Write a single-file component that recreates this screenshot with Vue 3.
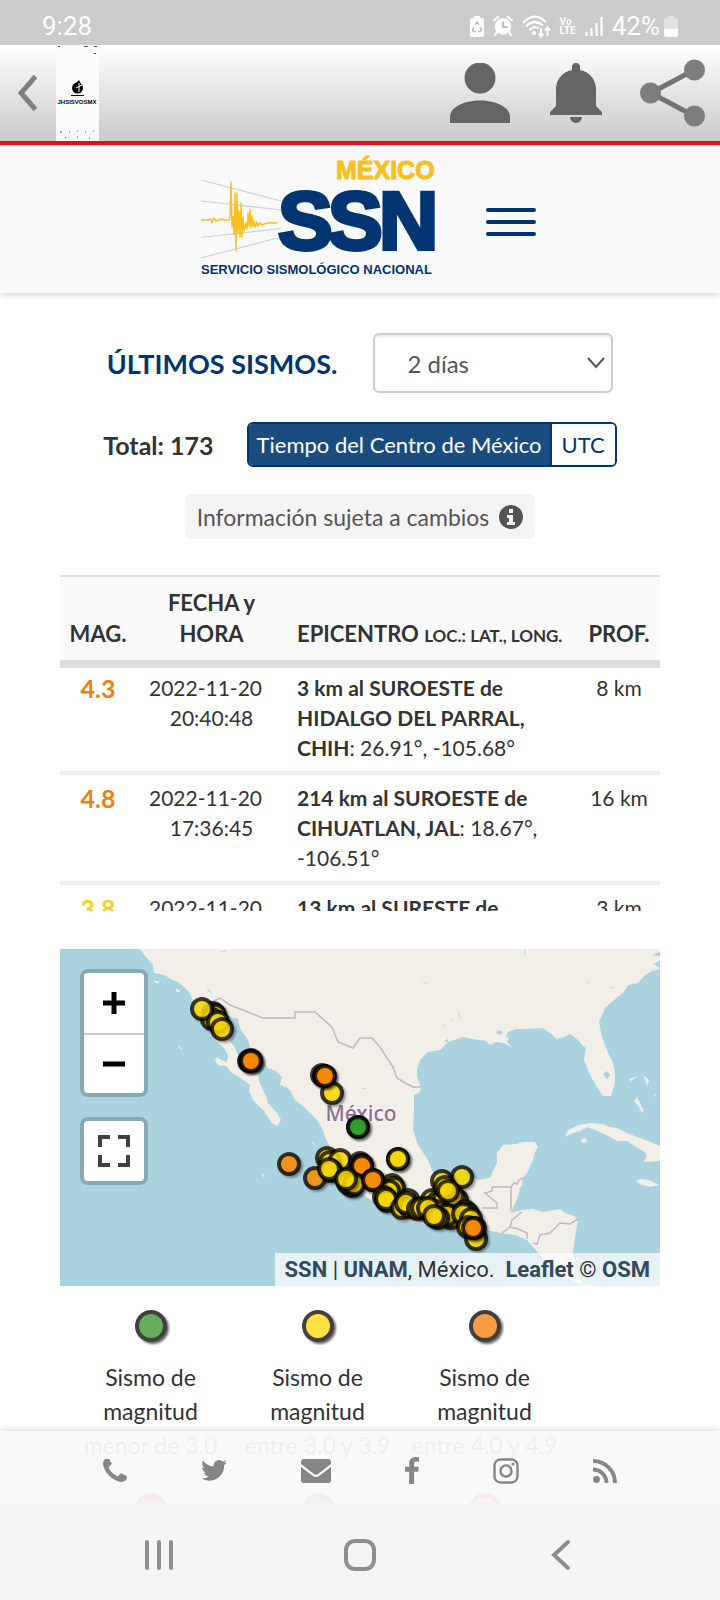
<script setup>
import { ref } from 'vue'

const period = ref('2')
const zone = ref('centro')

const quakes = [
  { mag: '4.3', level: 'orange', date: '2022-11-20', time: '20:40:48', place: '3 km al SUROESTE de HIDALGO DEL PARRAL, CHIH', coords: '26.91°, -105.68°', depth: '8 km' },
  { mag: '4.8', level: 'orange', date: '2022-11-20', time: '17:36:45', place: '214 km al SUROESTE de CIHUATLAN, JAL', coords: '18.67°, -106.51°', depth: '16 km' },
  { mag: '3.8', level: 'yellow', date: '2022-11-20', time: '', place: '13 km al SURESTE de', coords: '', depth: '3 km' },
]

const Y = '#ffdf00'
const O = '#ff9000'
const G = '#35a030'
const markers = [
  [153, 64, Y], [155, 66, Y], [152, 70, Y], [142, 60, Y], [158, 73, Y], [162, 80, Y],
  [189, 112, O], [191, 111, O], [190, 112, O], [191, 112, O],
  [272, 144, Y], [262, 126, O], [264, 127, O], [265, 127, O],
  [298, 178, G], [298, 178, G],
  [229, 215, O], [255, 229, O],
  [267, 209, Y], [270, 213, Y], [280, 211, Y], [271, 222, Y], [269, 220, Y],
  [338, 210, Y], [338, 210, Y],
  [300, 214, O], [302, 216, O], [302, 217, O],
  [292, 237, Y], [288, 234, Y], [294, 235, Y], [286, 230, Y],
  [332, 236, Y], [334, 239, Y], [329, 242, Y], [313, 231, O], [313, 231, O],
  [324, 248, Y], [327, 252, Y], [326, 250, Y],
  [348, 251, Y], [342, 259, Y], [350, 258, Y], [346, 254, Y], [358, 260, Y],
  [372, 251, Y], [378, 253, Y], [362, 259, Y], [384, 250, Y], [376, 262, Y],
  [397, 251, Y], [393, 247, Y], [402, 228, Y], [382, 232, Y], [385, 238, Y], [388, 242, Y],
  [368, 259, Y], [391, 269, Y], [387, 266, Y], [378, 269, Y], [374, 267, Y],
  [405, 262, Y], [408, 265, Y], [403, 265, Y], [411, 270, Y],
  [416, 290, Y], [408, 278, Y], [415, 279, O], [413, 279, O],
]

const legend = [
  { color: '#66ad5e', lines: ['Sismo de', 'magnitud', 'menor de 3.0'] },
  { color: '#ffe142', lines: ['Sismo de', 'magnitud', 'entre 3.0 y 3.9'] },
  { color: '#f99b43', lines: ['Sismo de', 'magnitud', 'entre 4.0 y 4.9'] },
  { color: '#ff5a5a', lines: [] },
  { color: '#b06a6a', lines: [] },
  { color: '#ff4df0', lines: [] },
]
</script>

<template>
  <div class="screen">
    <div class="status">
      <span class="clock">9:28</span>
      <div class="status-icons">
        <svg class="s-recycle" viewBox="0 0 14 21"><path fill="#fff" d="M4 0h6v2h2a2 2 0 0 1 2 2v15a2 2 0 0 1-2 2H2a2 2 0 0 1-2-2V4a2 2 0 0 1 2-2h2z" /><path d="M5 9l2-3 2 3M10 11l1.500 3-1 1.500H8.500M4 11l-1.500 3 1 1.500h2" fill="none" stroke="#b5b5b5" stroke-width="1.300" /></svg>
        <svg class="s-alarm" viewBox="0 0 20 20"><circle cx="10" cy="10.500" r="8.300" fill="#fff" /><path d="M1 4.500L5 1M19 4.500L15 1M4 16l-2 3M16 16l2 3" stroke="#fff" stroke-width="2.200" stroke-linecap="round" /><path d="M10 5.500v5.500h4.500" fill="none" stroke="#bbb" stroke-width="1.800" /></svg>
        <svg class="s-wifi" viewBox="0 0 29 23"><g fill="none" stroke="#fff" stroke-width="2.200"><path d="M1 8Q12-4 24 7" /><path d="M4 11.500Q12 3 21 10.500" /><path d="M7.500 15Q12 10 17 13.500" /></g><circle cx="12" cy="18" r="2" fill="#fff" /><path d="M19 13v8M16.500 18.500L19 21.500l2.500-3M25.500 21v-8M23 15.500l2.500-3 2.500 3" fill="none" stroke="#fff" stroke-width="2" /></svg>
        <span class="volte">Vo<br>LTE</span>
        <svg class="s-signal" viewBox="0 0 18 19"><path d="M1.500 15v4M6.500 11v8M11.500 6v13M16.500 0v19" stroke="#fff" stroke-width="2.200" /></svg>
        <span class="percent">42%</span>
        <svg class="s-batt" viewBox="0 0 14 21"><path fill="#e2e2e2" d="M4 0h6v2h2a2 2 0 0 1 2 2v9H0V4a2 2 0 0 1 2-2h2z" /><path fill="#fff" d="M0 13h14v6a2 2 0 0 1-2 2H2a2 2 0 0 1-2-2z" /></svg>
      </div>
    </div>

    <header class="appbar">
      <button class="icon-btn back" aria-label="Volver"><svg viewBox="0 0 20 38"><path d="M17.500 2.500L3 19l14.500 16.500" fill="none" stroke="#808080" stroke-width="5" /></svg></button>
      <svg class="app-logo" viewBox="0 0 43 96">
        <rect width="43" height="96" fill="#fcfcfc" />
        <circle cx="21.500" cy="43" r="5.500" fill="#000" /><path d="M19 39l4-4 2 4z" fill="#000" /><path d="M23 38v9M20 43l6-3" stroke="#fff" stroke-width="1" /><path d="M15 50.500h13" stroke="#000" />
        <text x="21" y="59" text-anchor="middle" class="app-logo-text">JHSISVOSMX</text>
        <path d="M2 1.500h2M28 1.500h4M38 1.500h3M38 8.500h2M4 87h2M13 87h1M21 86h1M29 87h1M37 86h1M9 92.500h1M21 92h1M33 93h1" stroke="#555" />
      </svg>
      <div class="spacer"></div>
      <button class="icon-btn person" aria-label="Perfil"><svg viewBox="0 0 60 60"><circle cx="30" cy="15" r="15.500" fill="#656565" /><path d="M0 60V54C0 44 14 37.500 30 37.500S60 44 60 54v6z" fill="#656565" /></svg></button>
      <button class="icon-btn bell" aria-label="Notificaciones"><svg viewBox="0 0 52 60"><path fill="#656565" d="M22 7V4a4 4 0 0 1 8 0v3c10 2 16 10 16 19v17l6 6v3H0v-3l6-6V26C6 17 12 9 22 7zM20 54h12a6 6 0 0 1-12 0z" /></svg></button>
      <button class="icon-btn share" aria-label="Compartir"><svg viewBox="0 0 66 68"><path d="M54 11L11 34l43 23" fill="none" stroke="#737373" stroke-width="5" /><g fill="#7d7d7d"><circle cx="54.500" cy="11" r="10.500" /><circle cx="10.500" cy="34" r="10.500" /><circle cx="54.500" cy="57" r="10.500" /></g></svg></button>
    </header>

    <main class="web">
      <div class="site-head">
        <svg class="ssn" viewBox="20 6 236 126" role="img" aria-label="SSN México">
          <g fill="none" stroke="#c9d1dc" stroke-width="1.200"><path d="M21 35l80 21M21 56l80 9M21 92.500l80-9M21 113l80-21" /></g>
          <path d="M21 75h7l3-1 1 4 2-5 2 3 3-1 3-1 2 1h5l1-2 1-36 1 45 1-10 1 18 1-42 1 58 1-58 1 40 1-22 1 26 1-34 1 34 1-20 1 14 2-8 1 6 1-16 1 13 1-17 1 19 1-12 1 10 1-5 1 6 2-5 1 4 2-3 2 2 5-2h10" fill="none" stroke="#f8c01d" stroke-width="1.400" stroke-linejoin="round" />
          <text x="156" y="34" class="logo-mx">MÉXICO</text>
          <text x="98 148 199" y="104" class="logo-ssn">SSN</text>
          <text x="21" y="129" class="logo-sub">SERVICIO SISMOLÓGICO NACIONAL</text>
        </svg>
        <button class="burger" aria-label="Menú"><span></span><span></span><span></span></button>
      </div>

      <section class="content">
        <div class="title-row">
          <label for="period" class="title">ÚLTIMOS SISMOS.</label>
          <div class="select-wrap">
            <select id="period" v-model="period"><option value="2">2 días</option></select>
            <svg viewBox="0 0 18 12"><path d="M1 1l8 9 8-9" fill="none" stroke="#555" stroke-width="2" /></svg>
          </div>
        </div>

        <div class="total-row">
          <span class="total">Total: 173</span>
          <div class="zones">
            <button :class="{ on: zone === 'centro' }" @click="zone = 'centro'">Tiempo del Centro de México</button>
            <button :class="{ on: zone === 'utc' }" @click="zone = 'utc'">UTC</button>
          </div>
        </div>

        <div class="notice">
          <span>Información sujeta a cambios</span>
          <svg viewBox="0 0 24 24"><circle cx="12" cy="12" r="12" fill="#555" /><path d="M10 4h4v4h-4zM8 10h6v7h2v3H8v-3h2v-4H8z" fill="#f4f4f4" /></svg>
        </div>

        <div class="table-box">
          <table>
            <colgroup><col class="c-mag"><col class="c-date"><col><col class="c-depth"></colgroup>
            <thead>
              <tr><th>MAG.</th><th>FECHA y HORA</th><th class="left">EPICENTRO <small>LOC.: LAT., LONG.</small></th><th>PROF.</th></tr>
            </thead>
            <tbody>
              <tr v-for="q in quakes" :key="q.mag">
                <td class="mag" :class="q.level">{{ q.mag }}</td>
                <td class="when"><span class="date">{{ q.date }}</span> <span class="time">{{ q.time }}</span></td>
                <td class="left"><b>{{ q.place }}</b><template v-if="q.coords">: {{ q.coords }}</template></td>
                <td>{{ q.depth }}</td>
              </tr>
            </tbody>
          </table>
        </div>

        <div class="map">
          <svg class="map-art" viewBox="0 0 600 337" preserveAspectRatio="xMidYMid slice">
            <defs>
              <filter id="pin-shadow" x="-30%" y="-30%" width="180%" height="180%"><feDropShadow dx="2" dy="2" stdDeviation="1" flood-color="#000" flood-opacity="0.450" /></filter>
            </defs>
            <rect width="600" height="337" fill="#aad3df" />
            <g fill="#f2efe9">
              <path d="M80 0L86 8 93 16 94 24 100 25 105 26 110 30 118 33 124 38 130 44 132 50 137 53 139 62 142 71 150 84 157 93 164 99 168 106 167 113 161 111 157 108 155 111 158 116 166 117 172 124 182 130 190 136 189 142 193 151 203 161 212 174 217 177 221 171 217 164 208 154 206 147 203 141 199 132 198 124 190 119 183 110 177 104 174 97 169 91 167 82 168 66 172 69 178 69 180 79 188 91 190 98 198 104 203 111 208 119 216 122 222 128 220 136 226 138 230 141 235 151 244 158 257 171 263 181 265 188 270 198 266 210 274 228 288 240 300 243 320 258 340 271 367 276 393 281 405 284 415 279 427 281 440 284 455 286 467 291 473 298 482 308 493 314 503 328 517 334 530 337 524 337 515 321 513 304 515 288 518 271 514 267 505 264 500 260 483 263 473 260 462 261 450 264 452 261 458 248 460 240 462 236 463 229 467 224 473 211 475 203 478 198 475 193 463 193 457 195 443 196 437 204 437 214 432 224 430 229 423 230 418 231 413 228 405 235 390 238 378 232 372 221 368 211 358 196 353 181 354 161 354 146 360 143 361 138 357 128 357 120 360 111 365 106 368 103 380 101 388 93 403 88 412 90 420 91 426 92 430 96 436 93 443 94 452 98 447 93 449 88 445 89 448 83 456 80 465 80 483 79 490 84 497 90 504 88 510 85 518 91 522 96 526 99 524 111 530 126 537 138 543 147 551 147 555 134 555 124 553 114 548 104 542 88 539 73 545 59 554 51 563 44 568 36 578 34 585 26 592 22 600 20V0z" />
              <path d="M505 188L508 181 519 176 530 174 543 175 550 178 557 179 567 184 577 188 588 192 600 197V212L583 213 587 208 585 203 578 199 567 192 557 192 550 188 540 183 527 178 520 182 513 184zM521 190l5-1 1 4-5 1zM575 232l6-2 8 1 10 5-8 2-9-2zM574 152l3-4 3 6 4 10-5-6zM569 130l9-3-7 5zM583 126l6 5-2 6-2-7zM594 144l2 4-2-1zM579 161l4-2 1 5z" />
              <path d="M94 32l5 1-2 1zM116 40l4 2-3 1zM118 97l4 3zM202 225l2 1v2zM252 193l4 4z" stroke="#f2efe9" />
            </g>
            <g fill="#aad3df"><path d="M146 39l5 5-1-3zM543 125l4-3 3 4-3 4zM436 83l4-2 3 3-4 2zM600 3l-8 3 8 1zM600 12l-7 3 7 4zM384 92l4-2v3zM300 139h5v1zM299 138l-4 1z" /><path d="M363 32l4 3M398 63l3 7M391 69l3 3M382 76l3 1M526 32l4 4M550 38l4 1M465 0v6M160 3l6-1M448 262l8-3M459 242l3-5" stroke="#bcdbe2" fill="none" /></g>
            <g fill="none" stroke="#c9b2c4" stroke-width="1.500">
              <path d="M137 53L152 53 160 49 170 56 203 69H235V63H255L264 71 272 78 278 93 293 99 300 89H312L320 98 333 118 337 129 345 134 353 138H361" />
              <path d="M422 259H437V254L425 244 432 242V238H451V261M451 238L454 234 457 235 459 231 463 229M462 263L452 271 450 278 442 284M450 278L458 280 467 284V290M473 294L477 295 480 286 490 284 500 274 510 275 518 270" />
            </g>
            <text x="301" y="172" text-anchor="middle" class="country">México</text>
            <circle v-for="(m, i) in markers" :key="i" :cx="m[0]" :cy="m[1]" r="10" :fill="m[2]" fill-opacity="0.800" stroke="#000" stroke-width="4" stroke-opacity="0.740" filter="url(#pin-shadow)" />
          </svg>
          <div class="controls">
            <div class="ctl">
              <button aria-label="Acercar"><svg viewBox="0 0 22 22"><path d="M0 11h22M11 0v22" stroke="#000" stroke-width="5" /></svg></button>
              <button aria-label="Alejar"><svg viewBox="0 0 22 22"><path d="M0 11h22" stroke="#000" stroke-width="5" /></svg></button>
            </div>
            <div class="ctl">
              <button aria-label="Pantalla completa"><svg class="full" viewBox="0 0 32 32"><path d="M2 12V2h10M20 2h10v10M30 20v10H20M12 30H2V20" fill="none" stroke="#404040" stroke-width="4" /></svg></button>
            </div>
          </div>
          <div class="credit"><a href="#ssn">SSN</a> | <a href="#unam">UNAM</a>, México. &nbsp;<a href="#leaflet">Leaflet</a> © <a href="#osm">OSM</a></div>
        </div>

        <ul class="legend">
          <li v-for="item in legend" :key="item.color">
            <svg viewBox="0 0 38 38"><circle cx="19" cy="19" r="14" :fill="item.color" stroke="#404040" stroke-width="4" /></svg>
            <p><span v-for="l in item.lines" :key="l">{{ l }}</span></p>
          </li>
        </ul>
      </section>

      <nav class="social">
        <a href="#tel" class="i24" aria-label="Teléfono"><svg viewBox="192 192 1408 1408"><path d="M1600 1240q0 27-10 70.500t-21 68.500q-21 50-122 106-94 51-186 51-27 0-53-3.500t-57.500-12.500-47-14.500-55.500-20.500-49-18q-98-35-175-83-127-79-264-216t-216-264q-48-77-83-175-3-9-18-49t-20.500-55.500-14.500-47-12.500-57.500-3.500-53q0-92 51-186 56-101 106-122 25-11 68.500-21t70.500-10q14 0 21 3 18 6 53 76 11 19 30 54t35 63.500 31 53.500q3 4 17.500 25t21.500 35.500 7 28.500q0 20-28.500 50t-62 55-62 53-28.500 46q0 9 5 22.500t8.500 20.500 14 24 11.500 19q76 137 174 235t235 174q2 1 19 11.500t24 14 20.500 8.500 22.500 5q18 0 46-28.500t53-62 55-62 50-28.500q14 0 28.500 7t35.500 21.500 25 17.500q25 15 53.500 31t63.500 35 54 30q70 35 76 53 3 7 3 21z" /></svg></a>
        <a href="#tw" class="i26" aria-label="Twitter"><svg viewBox="100 200 1600 1400"><path d="M1684 408q-67 98-162 167 1 14 1 42 0 130-38 259.500t-115.500 248.500-184.500 210.500-258 146-323 54.500q-271 0-496-145 35 4 78 4 225 0 401-138-105-2-188-64.500t-114-159.500q33 5 61 5 43 0 85-11-112-23-185.500-111.500t-73.500-205.500v-4q68 38 146 41-66-44-105-115t-39-154q0-88 44-163 121 149 294.500 238.500t371.500 99.500q-8-38-8-74 0-134 94.500-228.500t228.500-94.500q140 0 236 102 109-21 205-78-37 115-142 178 93-10 186-50z" /></svg></a>
        <a href="#mail" class="i30" aria-label="Correo"><svg viewBox="0 0 30 24"><path d="M3 0h24a3 3 0 0 1 3 3v2L17 15q-2 1.500-4 0L0 5V3a3 3 0 0 1 3-3zM0 8l12 9q3 2 6 0l12-9v13a3 3 0 0 1-3 3H3a3 3 0 0 1-3-3z" /></svg></a>
        <a href="#fb" class="i14" aria-label="Facebook"><svg viewBox="479 0 864 1664"><path d="M1343 12v264h-157q-86 0-116 36t-30 108v189h293l-39 296h-254v759h-306v-759h-255v-296h255v-218q0-186 104-288.500t277-102.500q147 0 228 12z" /></svg></a>
        <a href="#ig" class="i26" aria-label="Instagram"><svg viewBox="0 0 26 26"><rect x="1.500" y="1.500" width="23" height="23" rx="6" fill="none" stroke="#868686" stroke-width="2.400" /><circle cx="13" cy="13" r="5.600" fill="none" stroke="#868686" stroke-width="2.400" /><circle cx="20" cy="6" r="1.600" /></svg></a>
        <a href="#rss" class="i24" aria-label="RSS"><svg viewBox="0 0 24 24"><circle cx="3.500" cy="20.500" r="3.400" /><path d="M0 10.500A13.500 13.500 0 0 1 13.500 24M0 2A22 22 0 0 1 22 24" fill="none" stroke="#868686" stroke-width="3.800" /></svg></a>
      </nav>
    </main>

    <nav class="sysnav">
      <button aria-label="Recientes"><svg viewBox="0 0 32 32"><path d="M4 3v26M16 3v26M28 3v26" stroke="#8e8e8e" stroke-width="4" stroke-linecap="round" /></svg></button>
      <button aria-label="Inicio"><svg viewBox="0 0 32 32"><rect x="2" y="2" width="28" height="28" rx="9" fill="none" stroke="#8e8e8e" stroke-width="4" /></svg></button>
      <button aria-label="Atrás"><svg viewBox="0 0 32 32"><path d="M23 3L9 16l14 13" fill="none" stroke="#8e8e8e" stroke-width="4" stroke-linecap="round" /></svg></button>
    </nav>
  </div>
</template>

<style>
body { margin: 0; background: #fff; }
</style>

<style scoped>
* { box-sizing: border-box; }
svg { display: block; }
button { font: inherit; cursor: pointer; }
.screen { display: flex; flex-direction: column; height: 100vh; font-family: Lato, sans-serif; color: #333; background: #fff; }

.status { display: flex; justify-content: space-between; align-items: center; height: 45px; padding: 7px 42px 0; background: #cbcbcb; color: #fff; font: 26px/30px Roboto, sans-serif; }
.status-icons { display: flex; align-items: center; gap: 9px; }
.s-recycle, .s-batt { width: 14px; height: 21px; }
.s-alarm { width: 20px; height: 20px; }
.s-wifi { width: 29px; height: 23px; }
.s-signal { width: 18px; height: 19px; }
.s-batt { margin-left: -5px; }
.volte { font-size: 10px; line-height: 9px; font-weight: 700; }

.appbar { display: flex; align-items: center; height: 100px; padding: 0 14px 0 18px; background: linear-gradient(#fff, #cacaca); border-bottom: 4px solid #e10f0f; }
.icon-btn { border: 0; padding: 0; background: none; }
.icon-btn svg { width: 100%; }
.back { width: 20px; }
.app-logo { width: 43px; height: 96px; margin-left: 18px; }
.app-logo-text { font: bold 6px "Liberation Sans", sans-serif; }
.spacer { flex: 1; }
.person { width: 60px; }
.bell { width: 52px; margin: 0 38px 0 40px; }
.share { width: 66px; }

.web { position: relative; flex: 1; min-height: 0; overflow: hidden; }
.site-head { display: flex; justify-content: center; align-items: center; gap: 50px; height: 148px; padding: 6px 0 0 16px; background: #f9f9f9; box-shadow: 0 1px 8px rgba(0, 0, 0, 0.2); }
.ssn { width: 236px; height: 126px; margin-bottom: 16px; }
.logo-mx { font: bold 25px "Liberation Sans", sans-serif; fill: #f8c01d; stroke: #f8c01d; stroke-width: 1px; }
.logo-ssn { font: bold 82px "Liberation Sans", sans-serif; fill: #003571; stroke: #003571; stroke-width: 4px; }
.logo-sub { font: bold 13px "Liberation Sans", sans-serif; fill: #003571; }
.burger { display: flex; flex-direction: column; gap: 8px; width: 50px; padding: 0; border: 0; background: none; }
.burger span { height: 4px; border-radius: 2px; background: #003571; }

.content { padding: 40px 60px 0; }
.title-row, .total-row { display: flex; align-items: center; justify-content: center; gap: 33px; }
.title-row { gap: 36px; }
.title { font-size: 27px; font-weight: 700; color: #003571; }
.select-wrap { position: relative; width: 240px; }
select { appearance: none; width: 100%; height: 60px; padding: 0 32px; border: 2px solid #ccc; border-radius: 6px; background: #fff; color: #555; font: 24px Lato, sans-serif; box-shadow: inset 0 2px 2px rgba(0, 0, 0, 0.08); }
.select-wrap svg { position: absolute; right: 8px; top: 24px; width: 18px; height: 12px; pointer-events: none; }
.total-row { margin-top: 29px; }
.total { font-size: 25px; font-weight: 700; }
.zones { display: flex; border: 2px solid #003571; border-radius: 6px; overflow: hidden; }
.zones button { height: 41px; padding: 0 10px; border: 0; background: #fff; color: #003571; font-size: 22px; }
.zones .on { padding: 0 8px; background: #1b4c80; color: #fff; border-right: 2px solid #003571; }
.notice { display: flex; align-items: center; gap: 10px; width: fit-content; height: 45px; margin: 27px auto 0; padding: 0 12px; border-radius: 6px; background: #f4f4f4; color: #555; font-size: 23px; }
.notice svg { width: 24px; height: 24px; }

.table-box { height: 336px; margin-top: 36px; overflow: hidden; }
table { width: 100%; border-collapse: collapse; table-layout: fixed; border-top: 2px solid #ddd; font-size: 21px; line-height: 30px; }
.c-mag { width: 76px; }
.c-date { width: 151px; }
.c-depth { width: 82px; }
th { padding: 10px 0 11px; vertical-align: bottom; background: #fafafa; border-bottom: 8px solid #ddd; text-align: center; font-size: 22px; line-height: 31px; }
th:nth-child(2) { padding: 10px 30px 11px; }
td { padding: 8px 0; vertical-align: top; text-align: center; border-bottom: 4px solid #efefef; }
tbody tr:first-child td { padding-top: 5px; }
th.left, td.left { padding-left: 10px; text-align: left; }
th small { font-size: 17px; line-height: 1; }
.mag { font-size: 25px; font-weight: 700; }
.orange { color: #e8810f; }
.yellow { color: #f2d21b; }
.when span { display: block; }
.date { padding-right: 12px; }

.map { position: relative; height: 337px; margin-top: 38px; overflow: hidden; }
.map-art { width: 100%; height: 100%; }
.country { font: 500 21px "Noto Sans", sans-serif; fill: #8d6f8f; stroke: #f6f2f4; stroke-width: 3px; paint-order: stroke; }
.controls { position: absolute; left: 20px; top: 20px; display: grid; gap: 20px; }
.ctl { border: 4px solid rgba(0, 0, 0, 0.2); border-radius: 8px; background-clip: padding-box; overflow: hidden; }
.ctl button { display: grid; place-items: center; width: 60px; height: 60px; padding: 0; border: 0; background: #fff; }
.ctl button + button { border-top: 2px solid #ccc; }
.ctl svg { width: 22px; height: 22px; }
.ctl .full { width: 32px; height: 32px; }
.credit { position: absolute; right: 0; bottom: 0; padding: 0 10px; background: rgba(255, 255, 255, 0.7); color: #333; font: 22px/33px Roboto, sans-serif; white-space: nowrap; }
.credit a { color: #34495e; font-weight: 700; text-decoration: none; }

.legend { display: flex; flex-wrap: wrap; margin: 0; padding: 21px 0 0 7px; list-style: none; row-gap: 28px; }
.legend li { flex: 0 0 167px; text-align: center; }
.legend li:nth-child(3n) { margin-right: 60px; }
.legend svg { width: 38px; height: 38px; margin: 0 auto; filter: drop-shadow(2px 2px 1px rgba(0, 0, 0, 0.6)); }
.legend p { margin: 15px 0 0; font-size: 23px; line-height: 34px; white-space: nowrap; }
.legend p span { display: block; }

.social { position: absolute; left: 0; right: 0; bottom: 0; display: flex; justify-content: space-between; align-items: center; height: 73px; padding: 6px 103px 0; background: rgba(249, 249, 249, 0.95); box-shadow: 0 0 8px rgba(0, 0, 0, 0.2); }
.social svg { width: 100%; fill: #868686; }
.i14 { width: 14px; }
.i24 { width: 24px; }
.i26 { width: 26px; }
.i30 { width: 30px; }

.sysnav { position: relative; display: flex; height: 96px; padding: 6px 58px 0; background: #f5f5f5; }
.sysnav button { flex: 1; display: grid; place-items: center; border: 0; background: none; }
.sysnav svg { width: 32px; height: 32px; }
</style>
